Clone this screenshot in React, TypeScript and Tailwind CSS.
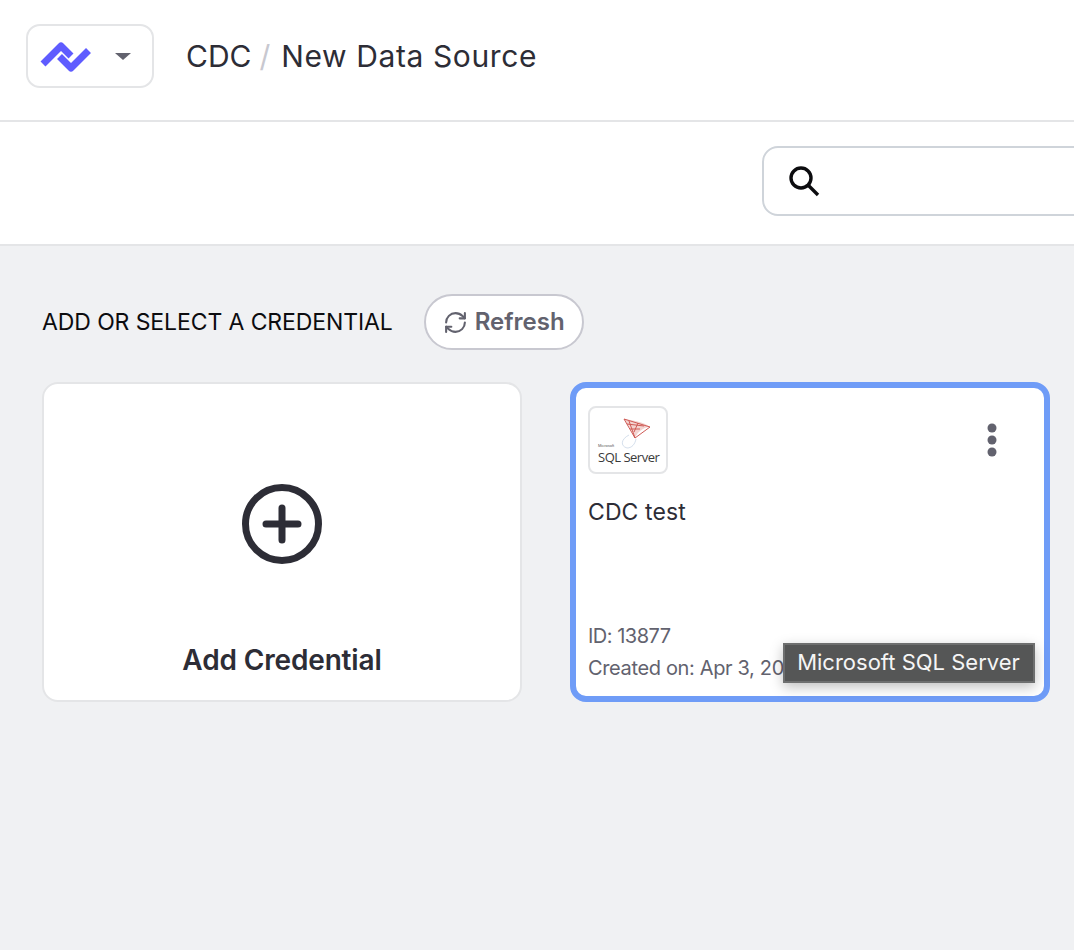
import { RefreshCw } from "lucide-react";

function BrandLogo() {
  return (
    <svg width="52" height="32" viewBox="0 0 52 32" fill="none">
      <path d="M3 24 L21 6 L31 16" stroke="#5f5cff" strokeWidth="7" strokeLinejoin="round" />
      <path d="M19.5 16.5 L31 28 L48.5 10.5" stroke="#5f5cff" strokeWidth="7" strokeLinejoin="round" />
    </svg>
  );
}

function SqlServerLogo() {
  return (
    <div className="flex h-[68px] w-[80px] shrink-0 flex-col rounded-[8px] border-2 border-[#e4e5e7] bg-white pl-[8px] pt-[8px]">
      <svg width="36" height="34" viewBox="0 0 36 34" fill="none" className="ml-[20px]">
        <path d="M6 3 C14 4 26 6 32 11 C26 11 20 15 17 22 C15 15 10 9 6 3Z" fill="#f3d3d0" />
        <path d="M6 3 L32 11 L17 22 Z M11 5 L17 22 M20 7 L16 16 M9 8 L26 10 M12 13 L22 13" stroke="#cf5a55" strokeWidth="1" />
        <path d="M11 19 C3 23 2 30 9 32 C14 32 17 28 18 23" stroke="#c9d6e6" strokeWidth="0.8" />
      </svg>
      <div className="mt-[-7px] flex flex-col">
        <span className="font-['Liberation_Sans',sans-serif] text-[4px] leading-[5px] text-[#555]">Microsoft</span>
        <span className="mt-[4px] whitespace-nowrap font-['Open_Sans',sans-serif] text-[13px] leading-[11px] tracking-[-0.5px] text-[#3a3a3a]">SQL Server</span>
      </div>
    </div>
  );
}

export default function App() {
  return (
    <div className="flex min-h-[950px] flex-col overflow-hidden bg-[#f0f1f3] font-['Inter',sans-serif]">
      <header className="flex h-[122px] items-center border-b-2 border-[#e4e5e7] bg-white pl-[26px]">
        <div className="mb-[8px] flex h-[64px] w-[128px] items-center rounded-[14px] border-2 border-[#e4e5e7] pl-[12px]">
          <BrandLogo />
          <div className="ml-[23px] h-0 w-0 border-x-[8px] border-t-[7px] border-x-transparent border-t-[#62626e]" />
        </div>
        <div className="mb-[8px] ml-[32px] flex items-center text-[30px] leading-[40px] text-[#2d2d36]">
          <span>CDC</span>
          <span className="ml-[8px] mr-[11px] text-[#c8c8d0]">/</span>
          <span className="tracking-[0.6px]">New Data Source</span>
        </div>
      </header>

      <div className="flex h-[124px] items-center border-b-2 border-[#e4e5e7] bg-white pl-[762px]">
        <div className="mb-[4px] flex h-[70px] w-[400px] shrink-0 items-center rounded-[16px] border-2 border-[#cfd4da] bg-white pl-[24px]">
          <svg width="34" height="34" viewBox="0 0 34 34" fill="none" stroke="#0c0c0f" strokeWidth="3.4" className="-ml-px">
            <circle cx="14" cy="14" r="10" />
            <path d="M21 21 L31 31" />
          </svg>
        </div>
      </div>

      <main className="px-[42px] pt-[48px]">
        <div className="flex items-center">
          <h2 className="text-[23px] leading-[32px] tracking-[-0.1px] text-[#0c0c0f]">ADD OR SELECT A CREDENTIAL</h2>
          <button className="ml-[31px] flex h-[56px] w-[160px] items-center justify-center gap-[7px] rounded-full border-2 border-[#c8c8d0] bg-white text-[24px] font-semibold text-[#62626e]">
            <RefreshCw size={25} strokeWidth={2} />
            Refresh
          </button>
        </div>

        <div className="mt-[32px] flex gap-[48px]">
          <div className="flex h-[320px] w-[480px] shrink-0 flex-col items-center rounded-[16px] border-2 border-[#e4e5e7] bg-white pt-[99px]">
            <svg width="82" height="82" viewBox="0 0 82 82" fill="none" stroke="#2d2d36" strokeWidth="7">
              <circle cx="41" cy="41" r="36.5" />
              <path d="M41 25 V57 M25 41 H57" strokeLinecap="round" />
            </svg>
            <div className="mt-[77px] text-[28px] font-semibold leading-[36px] tracking-[-0.15px] text-[#2d2d36]">Add Credential</div>
          </div>

          <div className="relative flex h-[320px] w-[480px] shrink-0 flex-col rounded-[16px] border-[6px] border-[#6f9cf7] bg-white px-[12px] pt-[18px]">
            <div className="flex items-start justify-between">
              <SqlServerLogo />
              <svg width="12" height="36" viewBox="0 0 12 36" fill="#62626e" className="mr-[34px] mt-[16px]">
                <circle cx="6" cy="6" r="4.5" />
                <circle cx="6" cy="18" r="4.5" />
                <circle cx="6" cy="30" r="4.5" />
              </svg>
            </div>
            <div className="mt-[20px] text-[23px] leading-[36px] tracking-[0.1px] text-[#2d2d36]">CDC test</div>
            <div className="mt-auto mb-[12px] text-[20px] leading-[32px] text-[#62626e]">
              <div className="tracking-[-0.5px]">ID: 13877</div>
              <div className="whitespace-nowrap tracking-[-0.35px]">Created on: Apr 3, 2024</div>
            </div>
            <div className="absolute left-[207px] top-[255px] flex h-[40px] w-[252px] items-center justify-center whitespace-nowrap border-2 border-[#6e6f6f] bg-[#555656] pb-[2px] pr-[1px] text-[22px] text-[#f5f5f5] shadow-[0_4px_12px_rgba(0,0,0,0.25)]">
              Microsoft SQL Server
            </div>
          </div>
        </div>
      </main>
    </div>
  );
}
